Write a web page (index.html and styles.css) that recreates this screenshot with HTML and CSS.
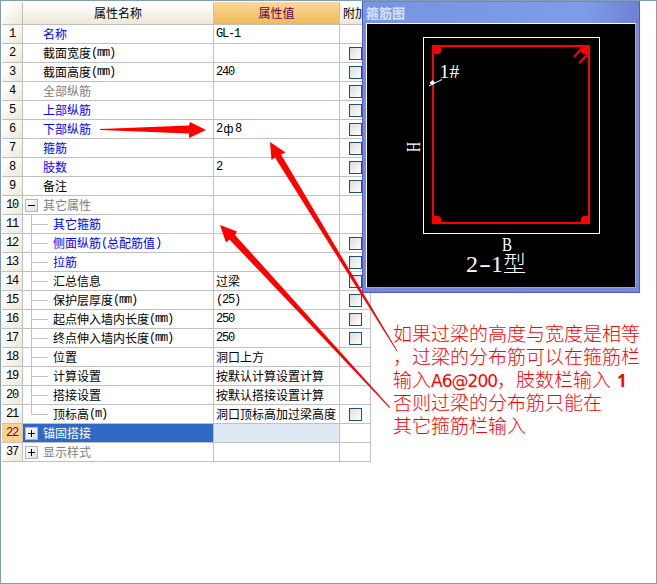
FILE: index.html
```
<!DOCTYPE html>
<html lang="zh-CN">
<head>
<meta charset="utf-8">
<title>属性编辑</title>
<link rel="stylesheet" href="styles.css">
</head>
<body>
<main class="frame">
<section class="grid">
  <div class="row head"><div class="num"></div><div class="name">属性名称</div><div class="value">属性值</div><div class="extra">附加</div></div>
  <div class="row"><div class="num">1</div><div class="name blue">名称</div><div class="value"><i>GL-1</i></div><div class="extra"></div></div>
  <div class="row"><div class="num">2</div><div class="name">截面宽度<i>(mm)</i></div><div class="value"></div><div class="extra"><b class="check"></b></div></div>
  <div class="row"><div class="num">3</div><div class="name">截面高度<i>(mm)</i></div><div class="value"><i>240</i></div><div class="extra"><b class="check"></b></div></div>
  <div class="row"><div class="num">4</div><div class="name gray">全部纵筋</div><div class="value"></div><div class="extra"><b class="check"></b></div></div>
  <div class="row"><div class="num">5</div><div class="name blue">上部纵筋</div><div class="value"></div><div class="extra"><b class="check"></b></div></div>
  <div class="row"><div class="num">6</div><div class="name blue">下部纵筋</div><div class="value"><i>2</i><span class="phi">ф</span><i>8</i></div><div class="extra"><b class="check"></b></div></div>
  <div class="row"><div class="num">7</div><div class="name blue">箍筋</div><div class="value"></div><div class="extra"><b class="check"></b></div></div>
  <div class="row"><div class="num">8</div><div class="name blue">肢数</div><div class="value"><i>2</i></div><div class="extra"><b class="check"></b></div></div>
  <div class="row"><div class="num">9</div><div class="name">备注</div><div class="value"></div><div class="extra"><b class="check"></b></div></div>
  <div class="row"><div class="num">10</div><div class="name node gray"><b class="toggle open"></b>其它属性</div><div class="value"></div><div class="extra"></div></div>
  <div class="row"><div class="num">11</div><div class="name node blue"><b class="branch"></b>其它箍筋</div><div class="value"></div><div class="extra"></div></div>
  <div class="row"><div class="num">12</div><div class="name node blue"><b class="branch"></b>侧面纵筋<i>(</i>总配筋值<i>)</i></div><div class="value"></div><div class="extra"><b class="check"></b></div></div>
  <div class="row"><div class="num">13</div><div class="name node blue"><b class="branch"></b>拉筋</div><div class="value"></div><div class="extra"><b class="check"></b></div></div>
  <div class="row"><div class="num">14</div><div class="name node"><b class="branch"></b>汇总信息</div><div class="value">过梁</div><div class="extra"><b class="check"></b></div></div>
  <div class="row"><div class="num">15</div><div class="name node"><b class="branch"></b>保护层厚度<i>(mm)</i></div><div class="value"><i>(25)</i></div><div class="extra"><b class="check"></b></div></div>
  <div class="row"><div class="num">16</div><div class="name node"><b class="branch"></b>起点伸入墙内长度<i>(mm)</i></div><div class="value"><i>250</i></div><div class="extra"><b class="check"></b></div></div>
  <div class="row"><div class="num">17</div><div class="name node"><b class="branch"></b>终点伸入墙内长度<i>(mm)</i></div><div class="value"><i>250</i></div><div class="extra"><b class="check"></b></div></div>
  <div class="row"><div class="num">18</div><div class="name node"><b class="branch"></b>位置</div><div class="value">洞口上方</div><div class="extra"></div></div>
  <div class="row"><div class="num">19</div><div class="name node"><b class="branch"></b>计算设置</div><div class="value">按默认计算设置计算</div><div class="extra"></div></div>
  <div class="row"><div class="num">20</div><div class="name node"><b class="branch"></b>搭接设置</div><div class="value">按默认搭接设置计算</div><div class="extra"></div></div>
  <div class="row"><div class="num">21</div><div class="name node"><b class="branch end"></b>顶标高<i>(m)</i></div><div class="value">洞口顶标高加过梁高度</div><div class="extra"><b class="check"></b></div></div>
  <div class="row selected"><div class="num">22</div><div class="name node"><b class="toggle"></b>锚固搭接</div><div class="value"></div><div class="extra"></div></div>
  <div class="row"><div class="num">37</div><div class="name node gray"><b class="toggle"></b>显示样式</div><div class="value"></div><div class="extra"></div></div>
</section>

<section class="window">
  <h1 class="title">箍筋图</h1>
  <svg class="canvas" width="268" height="263" viewBox="367 24 268 263">
    <g fill="none" shape-rendering="crispEdges">
      <rect x="423.5" y="37.500" width="176" height="196" stroke="#fff"/>
      <rect x="433" y="46" width="156" height="177" stroke="#f00" stroke-width="2"/>
    </g>
    <g fill="#f00">
      <circle cx="437" cy="50" r="4.300"/><circle cx="585" cy="50" r="4.300"/>
      <circle cx="437" cy="220" r="4.300"/><circle cx="585" cy="220" r="4.300"/>
      <rect x="432" y="216" width="5" height="8"/><rect x="585" y="216" width="5" height="8"/>
    </g>
    <path d="M583 47L574 57M589 53L579 63" stroke="#f00" stroke-width="2" fill="none"/>
    <path d="M429 86L442 79.500" stroke="#fff" fill="none"/>
    <path d="M430 82.500L432.500 80L435 82.500L433 85L430 84Z" fill="#fff"/>
    <g class="cad">
      <text x="439.500" y="78" font-size="19.500">1</text>
      <text x="449.500" y="78" font-size="19.500">#</text>
      <text transform="translate(420 152) rotate(-90)" font-size="19" textLength="10" lengthAdjust="spacingAndGlyphs">H</text>
      <text x="502" y="251" font-size="19" textLength="10" lengthAdjust="spacingAndGlyphs">B</text>
      <text x="466" y="272" font-size="24">2</text>
      <text x="479" y="272" font-size="24" textLength="12" lengthAdjust="spacingAndGlyphs">-</text>
      <text x="491" y="272" font-size="24">1</text>
      <text class="han" x="503" y="272" font-size="23">型</text>
    </g>
  </svg>
</section>

<svg class="arrows" width="657" height="584" fill="#f00">
  <path d="M100 129L189 125.500L190 122L206 130L189 138L189 133.500L100 130Z"/>
  <path d="M270 142L285.500 152.500L281 154.500L397.500 351L396.500 351L275 157.500L271.500 160Z"/>
  <path d="M220 225L237 231.500L235 235L390 407L389.500 408L229.500 239.500L226 242.500Z"/>
</svg>

<div class="note">
  <p>如果过梁的高度与宽度是相等</p>
  <p>，过梁的分布筋可以在箍筋栏</p>
  <p>输入<span class="code">A6@200</span>，肢数栏输入<span class="one">1</span></p>
  <p>否则过梁的分布筋只能在</p>
  <p>其它箍筋栏输入</p>
</div>
</main>
</body>
</html>
```
FILE: styles.css
```
* { box-sizing: border-box; }
body { margin: 0; background: #fff; overflow: hidden; font: 12px/18px "Noto Sans CJK SC", sans-serif; color: #000; }
.frame { position: relative; width: 657px; height: 584px; border: 1px solid #7f9db9; padding: 1px; }
.grid { width: 369px; }
.row { display: grid; grid-template-columns: 21px 191px 126px 31px; height: 19px; }
.row > div { display: flex; align-items: center; height: 100%; border-right: 1px solid #c0c0c0; border-bottom: 1px solid #c0c0c0; white-space: nowrap; overflow: hidden; }
.row i { padding-top: 1px; font: 12px/17px "Liberation Mono", monospace; letter-spacing: -1.2px; }
.row .num { justify-content: center; padding: 1px 0 0; background: linear-gradient(to bottom right, #fff 15%, #ece9d8); font: 12px/17px "Liberation Mono", monospace; letter-spacing: -1.2px; }
.name { padding-left: 20px; }
.name.node { padding-left: 0; }
.value { padding-left: 2px; }
.row.head { height: 23px; }
.head > div { justify-content: center; padding: 0; background: linear-gradient(#fff, #ece9d8); }
.head .value { background: linear-gradient(#fad79c, #f0bb58); color: #600050; }
.blue { color: #00f; }
.gray { color: #808080; }
.phi { width: 13px; font-family: "Liberation Sans", sans-serif; font-size: 12px; text-align: center; }
.check { width: 13px; height: 13px; margin-left: 9px; border: 1px solid #1c5180; background: linear-gradient(135deg, #dcdcd7, #fff); }
.toggle { display: grid; flex: none; width: 13px; height: 13px; margin: 0 5px 0 2px; border: 1px solid #b5b5b5; background: linear-gradient(#000, #000) center / 7px 1px no-repeat, linear-gradient(#000, #000) center / 1px 7px no-repeat, linear-gradient(135deg, #fff, #dedede); }
.toggle.open { background: linear-gradient(#000, #000) center / 7px 1px no-repeat, linear-gradient(135deg, #fff, #dedede); }
.branch { flex: none; width: 17px; height: 19px; margin: 0 5px 0 8px; border-left: 1px solid #c0c0c0; background: linear-gradient(#c0c0c0, #c0c0c0) 0 9px / 17px 1px no-repeat; }
.branch.end { height: 10px; align-self: flex-start; }
.selected .num { background: #ffd08c; color: #600050; }
.selected .name { background: #316ac5; color: #fff; }
.selected .value { background: #dfe9f5; }

.window { position: absolute; left: 361px; top: 0; width: 278px; height: 292px; padding: 0 3px 3px; border: 1px solid #4f5bc6; border-top-color: #6985cc; background: #7789dc; }
.title { height: 21px; margin: 0 -3px; padding-left: 3px; background: linear-gradient(90deg, #7795e2, #7d9de8 80%, #7080d6); color: #d8e4fc; font-size: 13px; line-height: 21px; }
.canvas { display: block; box-sizing: content-box; border: 1px solid #fff; border-right-color: #aca899; border-bottom-color: #aca899; background: #000; }
.cad { fill: #fff; font-family: "Liberation Serif", serif; }
.han { font-family: "Noto Sans CJK SC", sans-serif; font-weight: 300; }

.arrows { position: absolute; left: -1px; top: -1px; }
.note { position: absolute; left: 392px; top: 320px; color: #f00; font-size: 19px; font-weight: 300; line-height: 23px; white-space: nowrap; }
.note p { margin: 0; height: 23px; }
.code { display: inline-block; width: 66px; font: 17px/23px "DejaVu Sans", sans-serif; letter-spacing: -0.95px; }
.one { margin-left: 6px; font: bold 17px/23px "Noto Sans", sans-serif; }
```
